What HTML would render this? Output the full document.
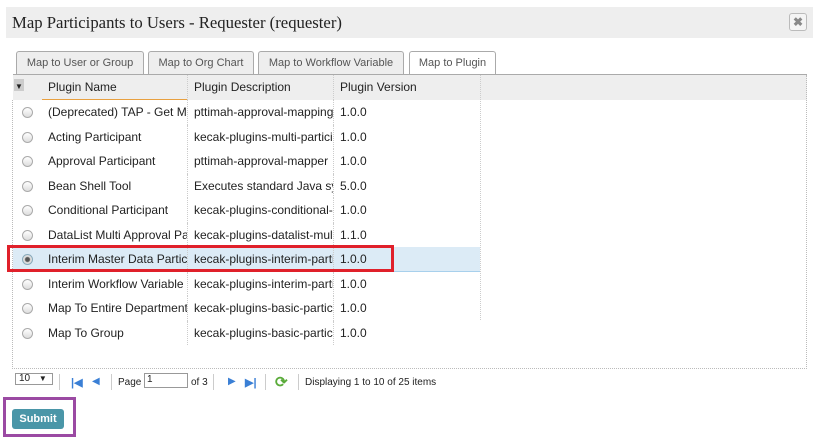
<!DOCTYPE html>
<html><head><style>
*{box-sizing:border-box;margin:0;padding:0}
body{width:821px;height:437px;background:#fff;font-family:"Liberation Sans",Arial,sans-serif;position:relative;overflow:hidden;color:#222}
.abs{position:absolute}
.hdr{left:6px;top:7px;width:807px;height:31px;background:#eee}
.hdr span{position:absolute;left:6px;top:6px;font-family:"Liberation Serif",serif;font-size:16.7px;color:#222}
.close{right:6px;top:6px;width:18px;height:18px;border:1px solid #bbb;border-radius:3px;background:#f4f4f4;font-size:12px;font-weight:bold;color:#888;text-align:center;line-height:16px}
.tab{top:51px;height:24px;border:1px solid #aaa;border-bottom:none;border-radius:3px 3px 0 0;background:#eee;font-size:11px;color:#555;text-align:center;line-height:22px}
.tab.on{background:#fff;height:25px}
.gline{left:13px;top:74px;width:794px;height:1px;background:#aaa}
.ghead{left:13px;top:75px;width:794px;height:25px;background:#eee}
.row{left:13px;width:467px;height:24.5px;font-size:12px}
.row div{position:absolute;top:0;height:100%;line-height:24px;white-space:nowrap;overflow:hidden;padding-left:6px}
.c1{left:29px;width:145px}
.c2{left:174px;width:146px;border-left:1px dotted #ccc}
.c3{left:320px;width:147px;border-left:1px dotted #ccc}
.radio{position:absolute;left:9px;top:7px;width:11px;height:11px;border-radius:50%;border:1px solid #aaa;background:linear-gradient(#fff,#ddd)}
.sel{background:#dcebf6;border-bottom:1px solid #a8d0ec}
</style></head><body>
<div class="abs hdr"><span>Map Participants to Users - Requester (requester)</span><div class="abs close">✖</div></div>
<div class="abs tab" style="left:16px;width:128px">Map to User or Group</div>
<div class="abs tab" style="left:148px;width:106px">Map to Org Chart</div>
<div class="abs tab" style="left:258px;width:146px">Map to Workflow Variable</div>
<div class="abs tab on" style="left:409px;width:87px">Map to Plugin</div>
<div class="abs gline"></div>
<div class="abs ghead"></div>
<div class="abs" style="left:14px;top:79px;width:10px;height:12px;background:#ccc"></div>
<div class="abs" style="left:15px;top:82px;font-size:8px">▼</div>
<div class="abs" style="left:806px;top:75px;width:1px;height:294px;border-left:1px dotted #bbb"></div>
<div class="abs" style="left:12px;top:100px;width:1px;height:269px;border-left:1px dotted #bbb"></div>
<div class="abs" style="left:12px;top:368px;width:795px;height:1px;border-top:1px dotted #bbb"></div>
<div class="abs row" style="top:75px;height:25px"><div class="c1" style="border-bottom:1px solid #e8a040">Plugin Name</div><div class="c2">Plugin Description</div><div class="c3">Plugin Version</div></div>
<div class="abs" style="left:480px;top:75px;width:1px;height:245px;border-left:1px dotted #ccc"></div>

<div class="abs row" style="top:100px"><span class="radio"></span><div class="c1">(Deprecated) TAP - Get Mapping</div><div class="c2">pttimah-approval-mapping</div><div class="c3">1.0.0</div></div>
<div class="abs row" style="top:124.5px"><span class="radio"></span><div class="c1">Acting Participant</div><div class="c2">kecak-plugins-multi-participant</div><div class="c3">1.0.0</div></div>
<div class="abs row" style="top:149px"><span class="radio"></span><div class="c1">Approval Participant</div><div class="c2">pttimah-approval-mapper</div><div class="c3">1.0.0</div></div>
<div class="abs row" style="top:173.5px"><span class="radio"></span><div class="c1">Bean Shell Tool</div><div class="c2">Executes standard Java syntax</div><div class="c3">5.0.0</div></div>
<div class="abs row" style="top:198px"><span class="radio"></span><div class="c1">Conditional Participant</div><div class="c2">kecak-plugins-conditional-participant</div><div class="c3">1.0.0</div></div>
<div class="abs row" style="top:222.5px"><span class="radio"></span><div class="c1">DataList Multi Approval Participant</div><div class="c2">kecak-plugins-datalist-multi</div><div class="c3">1.1.0</div></div>
<div class="abs row sel" style="top:247px"><span class="radio" style="border-color:#8ab;background:radial-gradient(#555 2px,#ddd 3px)"></span><div class="c1">Interim Master Data Participant</div><div class="c2">kecak-plugins-interim-participant</div><div class="c3">1.0.0</div></div>
<div class="abs row" style="top:271.5px"><span class="radio"></span><div class="c1">Interim Workflow Variable Participant</div><div class="c2">kecak-plugins-interim-participant</div><div class="c3">1.0.0</div></div>
<div class="abs row" style="top:296px"><span class="radio"></span><div class="c1">Map To Entire Department</div><div class="c2">kecak-plugins-basic-participant</div><div class="c3">1.0.0</div></div>
<div class="abs row" style="top:320.5px"><span class="radio"></span><div class="c1">Map To Group</div><div class="c2">kecak-plugins-basic-participant</div><div class="c3">1.0.0</div></div>

<div class="abs" style="left:7px;top:245px;width:387px;height:27px;border:3px solid #e0202a"></div>

<div class="abs" style="left:15px;top:373px;width:38px;height:12px;border:1px solid #999;font-size:10px;line-height:10px;padding-left:3px">10 <span style="font-size:8px;margin-left:6px">▼</span></div>
<div class="abs" style="left:59px;top:374px;width:1px;height:16px;background:#ccc"></div>
<div class="abs" style="left:71px;top:376px;color:#3a7fd5;font-size:11px;font-weight:bold">|◀</div>
<div class="abs" style="left:92px;top:376px;color:#3a7fd5;font-size:10px">◀</div>
<div class="abs" style="left:111px;top:374px;width:1px;height:16px;background:#ccc"></div>
<div class="abs" style="left:118px;top:377px;font-size:10px">Page</div>
<div class="abs" style="left:144px;top:373px;width:44px;height:15px;border:1px solid #999;font-size:10px;padding-left:2px">1</div>
<div class="abs" style="left:191px;top:377px;font-size:10px">of 3</div>
<div class="abs" style="left:213px;top:374px;width:1px;height:16px;background:#ccc"></div>
<div class="abs" style="left:228px;top:376px;color:#3a7fd5;font-size:10px">▶</div>
<div class="abs" style="left:245px;top:376px;color:#3a7fd5;font-size:11px;font-weight:bold">▶|</div>
<div class="abs" style="left:265px;top:374px;width:1px;height:16px;background:#ccc"></div>
<div class="abs" style="left:275px;top:373px;color:#5aab3a;font-size:15px;font-weight:bold">⟳</div>
<div class="abs" style="left:298px;top:374px;width:1px;height:16px;background:#ccc"></div>
<div class="abs" style="left:305px;top:377px;font-size:10px">Displaying 1 to 10 of 25 items</div>

<div class="abs" style="left:3px;top:397px;width:73px;height:40px;border:3px solid #9b4aa3"></div>
<div class="abs" style="left:12px;top:409px;width:52px;height:20px;background:#4a96a8;border-radius:3px;color:#fff;font-size:11px;font-weight:bold;text-align:center;line-height:20px">Submit</div>
</body></html>
